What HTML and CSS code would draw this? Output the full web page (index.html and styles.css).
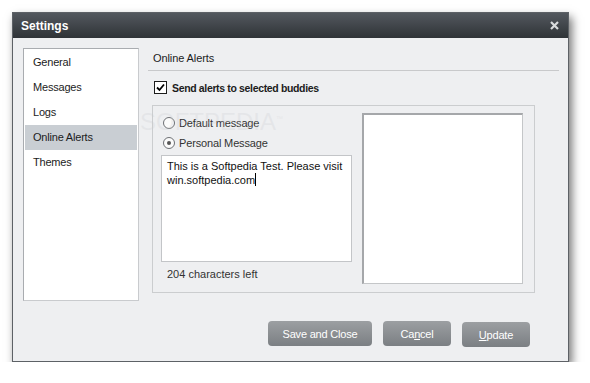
FILE: index.html
```html
<!DOCTYPE html>
<html lang="en">
<head>
  <meta charset="UTF-8" />
  <title>Settings</title>
  <link rel="stylesheet" href="styles.css">
</head>
<body>
  <div class="window">
    <div class="titlebar">
      <span class="title">Settings</span>
      <svg class="close" width="9" height="9" viewBox="0 0 9 9">
        <path d="M1 1 L8 8 M8 1 L1 8" stroke="#d9dbdd" stroke-width="2.2" />
      </svg>
    </div>

    <div class="main">
      <ul class="sidebar">
        <li>General</li>
        <li>Messages</li>
        <li>Logs</li>
        <li class="selected">Online Alerts</li>
        <li>Themes</li>
      </ul>

      <div class="panel">
        <div class="panel-title">Online Alerts</div>

        <label class="check-row">
          <span class="checkbox">
            <svg width="9" height="9" viewBox="0 0 9 9">
              <path d="M1 4.5 L3.5 7 L8 1.5" fill="none" stroke="#000" stroke-width="1.8" />
            </svg>
          </span>
          <span class="check-label">Send alerts to selected buddies</span>
        </label>

        <div class="group">
          <div class="message-col">
            <div class="radio-row"><span class="radio"></span>Default message</div>
            <div class="radio-row"><span class="radio checked"></span>Personal Message</div>
            <div class="textarea">This is a Softpedia Test. Please visit<br>win.softpedia.com<span class="caret"></span></div>
            <div class="counter">204 characters left</div>
          </div>
          <div class="buddy-box"></div>
          <div class="watermark">SOFTPEDIA<sup>™</sup></div>
        </div>
      </div>
    </div>

    <div class="buttons">
      <button class="btn">Save and Close</button>
      <button class="btn btn-cancel">Ca<u>n</u>cel</button>
      <button class="btn btn-update"><u>U</u>pdate</button>
    </div>
  </div>
</body>
</html>
```

FILE: styles.css
```css
body {
  margin: 0;
  padding: 0;
  background-color: #ffffff;
  font-family: 'Liberation Sans', Arial, sans-serif;
  font-size: 11px;
  color: #1c1c1c;
}

.window {
  margin: 12px 0 0 12px;
  width: 557px;
  height: 350px;
  box-sizing: border-box;
  border: 1px solid #5d6166;
  background-color: #eeeff1;
  box-shadow: 3px 5px 9px rgba(0, 0, 0, 0.55);
  display: flex;
  flex-direction: column;
}

.titlebar {
  height: 25px;
  flex: none;
  background: linear-gradient(#53585e, #2f3337);
  display: flex;
  align-items: center;
  justify-content: space-between;
  padding: 0 9px 0 8px;
}

.title {
  color: #ffffff;
  font-weight: bold;
  font-size: 12px;
}

.close {
  display: block;
}

.main {
  display: flex;
  padding: 10px 9px 0 10px;
}

.sidebar {
  list-style: none;
  margin: 0;
  padding: 1px;
  width: 116px;
  height: 253px;
  box-sizing: border-box;
  background-color: #ffffff;
  border: 1px solid #c9cbce;
  border-top-color: #a9acb0;
  border-left-color: #a9acb0;
  flex: none;
}

.sidebar li {
  height: 25px;
  line-height: 25px;
  padding-left: 8px;
  font-size: 11px;
  letter-spacing: -0.2px;
}

.sidebar li.selected {
  background-color: #c9ced3;
}

.panel {
  margin-left: 9px;
  flex: 1;
}

.panel-title {
  height: 22px;
  line-height: 20px;
  padding-left: 5px;
  font-size: 11px;
  letter-spacing: -0.1px;
  border-bottom: 1px solid #c8c9cb;
}

.check-row {
  display: flex;
  align-items: center;
  margin: 10px 0 0 6px;
  height: 13px;
}

.checkbox {
  width: 11px;
  height: 11px;
  border: 1px solid #1c1c1c;
  background-color: #ffffff;
  display: flex;
  align-items: center;
  justify-content: center;
}

.check-label {
  margin-left: 5px;
  font-weight: bold;
  font-size: 10.5px;
  letter-spacing: -0.35px;
}

.group {
  position: relative;
  margin: 11px 24px 0 4px;
  height: 188px;
  box-sizing: border-box;
  border: 1px solid #cbcdcf;
  display: flex;
  padding: 7px 11px 8px 8px;
}

.message-col {
  width: 191px;
  display: flex;
  flex-direction: column;
}

.radio-row {
  display: flex;
  align-items: center;
  height: 20px;
  padding-left: 2px;
  color: #333;
  letter-spacing: -0.15px;
}

.radio {
  width: 10px;
  height: 10px;
  border: 1px solid #6d7074;
  border-radius: 50%;
  background-color: #fbfbfb;
  margin-right: 4px;
  position: relative;
}

.radio.checked::after {
  content: "";
  position: absolute;
  left: 3px;
  top: 3px;
  width: 4px;
  height: 4px;
  border-radius: 50%;
  background-color: #555;
}

.textarea {
  margin-top: 2px;
  height: 107px;
  box-sizing: border-box;
  border: 1px solid #c3c5c8;
  background-color: #ffffff;
  padding: 3px 5px;
  line-height: 14px;
  color: #111;
}

.caret {
  display: inline-block;
  width: 1px;
  height: 13px;
  background-color: #000;
  vertical-align: -2px;
}

.counter {
  padding-left: 6px;
  margin-top: 6px;
  color: #333;
}

.buddy-box {
  margin-left: 10px;
  width: 161px;
  height: 171px;
  box-sizing: border-box;
  background-color: #ffffff;
  border: 1px solid #c4c6c8;
  border-top: 2px solid #a5a7aa;
  border-left: 2px solid #a5a7aa;
}

.watermark {
  position: absolute;
  left: -13px;
  top: 2px;
  font-size: 24px;
  letter-spacing: 0;
  color: rgba(200, 202, 205, 0.25);
  pointer-events: none;
}

.watermark sup {
  font-size: 7px;
}

.buttons {
  display: flex;
  justify-content: flex-end;
  gap: 11px;
  margin-top: 20px;
  padding-right: 38px;
}

.btn {
  height: 25px;
  border: none;
  border-radius: 4px;
  background: linear-gradient(#9c9fa2, #7b7f83);
  color: #ffffff;
  font-family: 'Liberation Sans', Arial, sans-serif;
  font-size: 11px;
  letter-spacing: -0.2px;
  padding: 0;
  width: 104px;
}

.btn-cancel {
  width: 68px;
}

.btn-update {
  width: 68px;
  margin-top: 1px;
}
```
